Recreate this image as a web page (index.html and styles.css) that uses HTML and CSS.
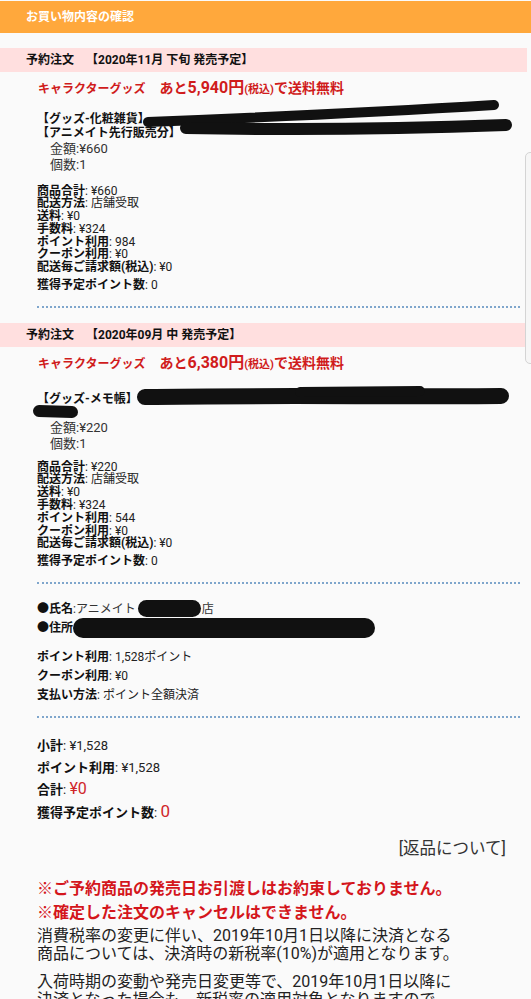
FILE: index.html
```html
<!DOCTYPE html>
<html lang="ja">
<head>
  <meta charset="UTF-8">
  <meta name="viewport" content="width=device-width, initial-scale=1.0">
  <title>お買い物内容の確認</title>
  <link rel="stylesheet" href="styles.css">
</head>
<body>

  <div class="topbar">お買い物内容の確認</div>

  <section class="order">
    <div class="order-head">予約注文　【2020年11月 下旬 発売予定】</div>
    <div class="order-body">
      <p class="free-ship"><span class="cat">キャラクターグッズ</span>　あと<span class="num">5,940円</span><span class="tax">(税込)</span>で送料無料</p>

      <div class="item">
        【グッズ-化粧雑貨】<br>【アニメイト先行販売分】
        <svg class="scrawl" width="531" height="60" viewBox="0 92 531 60">
          <path d="M148 121 C 250 117, 380 111, 494 104" />
          <path class="thick" d="M186 127 C 280 129, 400 128, 506 124" />
        </svg>
      </div>
      <div class="item-price">金額:¥660<br>個数:1</div>

      <div class="summary">
        <div><b>商品合計</b>: ¥660</div>
        <div><b>配送方法</b>: 店舗受取</div>
        <div><b>送料</b>: ¥0</div>
        <div><b>手数料</b>: ¥324</div>
        <div><b>ポイント利用</b>: 984</div>
        <div><b>クーポン利用</b>: ¥0</div>
        <div><b>配送毎ご請求額(税込)</b>: ¥0</div>
      </div>
      <div class="points-earned"><b>獲得予定ポイント数</b>: 0</div>
      <hr class="divider">
    </div>
  </section>

  <section class="order">
    <div class="order-head">予約注文　【2020年09月 中 発売予定】</div>
    <div class="order-body">
      <p class="free-ship"><span class="cat">キャラクターグッズ</span>　あと<span class="num">6,380円</span><span class="tax">(税込)</span>で送料無料</p>

      <div class="item item-second">
        【グッズ-メモ帳】<br>&nbsp;
        <svg class="scrawl" width="531" height="60" viewBox="0 370 531 60">
          <path class="wide" d="M145 394 C 260 392, 400 394, 501 393" />
          <path d="M300 389 L 420 388" />
          <path class="thick" d="M39 408 L 72 409" />
        </svg>
      </div>
      <div class="item-price">金額:¥220<br>個数:1</div>

      <div class="summary">
        <div><b>商品合計</b>: ¥220</div>
        <div><b>配送方法</b>: 店舗受取</div>
        <div><b>送料</b>: ¥0</div>
        <div><b>手数料</b>: ¥324</div>
        <div><b>ポイント利用</b>: 544</div>
        <div><b>クーポン利用</b>: ¥0</div>
        <div><b>配送毎ご請求額(税込)</b>: ¥0</div>
      </div>
      <div class="points-earned"><b>獲得予定ポイント数</b>: 0</div>
      <hr class="divider">
    </div>
  </section>

  <div class="wrap">
    <div class="address">
      <div><b>●氏名</b>:アニメイト<span class="redact redact-name"></span>店</div>
      <div><b>●住所</b><span class="redact redact-addr"></span></div>
    </div>

    <div class="payment">
      <div><b>ポイント利用</b>: 1,528ポイント</div>
      <div><b>クーポン利用</b>: ¥0</div>
      <div><b>支払い方法</b>: ポイント全額決済</div>
    </div>
    <hr class="divider">

    <div class="totals">
      <div><b>小計</b>: ¥1,528</div>
      <div><b>ポイント利用</b>: ¥1,528</div>
      <div><b>合計</b>: <span class="total-red">¥0</span></div>
      <div><b>獲得予定ポイント数</b>: <span class="total-red big">0</span></div>
    </div>

    <div class="returns">[返品について]</div>

    <div class="warn">
      <p>※ご予約商品の発売日お引渡しはお約束しておりません。</p>
      <p>※確定した注文のキャンセルはできません。</p>
    </div>

    <p class="note">消費税率の変更に伴い、2019年10月1日以降に決済となる<br>商品については、決済時の新税率(10%)が適用となります。</p>
    <p class="note">入荷時期の変動や発売日変更等で、2019年10月1日以降に<br>決済となった場合も、新税率の適用対象となりますので<br>予めご了承ください。</p>
  </div>

  <div class="scroll-thumb"></div>

</body>
</html>
```

FILE: styles.css
```css
body {
  margin: 0;
  padding: 0;
  background-color: #fafafa;
  color: #111;
  font-family: Roboto, "Noto Sans CJK JP", sans-serif;
  text-spacing-trim: space-all;
  overflow: hidden;
  position: relative;
}

p {
  margin: 0;
}

b {
  font-weight: 700;
}

.topbar {
  margin-top: 1px;
  height: 32px;
  line-height: 32px;
  padding-left: 26px;
  background-color: #ffa83c;
  color: #fff;
  font-size: 12px;
  font-weight: 700;
}

.order {
  margin-top: 15px;
}

.order-head {
  height: 24px;
  line-height: 24px;
  padding-left: 26px;
  margin-right: 4px;
  background-color: #ffdfdf;
  font-size: 12px;
  font-weight: 700;
}

.order-body,
.wrap {
  padding: 0 11px 0 37px;
}

.free-ship {
  margin-top: 6px;
  padding-left: 1px;
  line-height: 20px;
  height: 20px;
  color: #d01c1c;
  font-size: 14px;
  font-weight: 700;
}

.free-ship .cat {
  font-size: 12px;
}

.free-ship .num {
  font-size: 16px;
}

.free-ship .tax {
  font-size: 11px;
}

.item {
  position: relative;
  margin-top: 15px;
  line-height: 13.5px;
  font-size: 12px;
  font-weight: 700;
}

.item-second {
  margin-top: 20px;
}

/* black marker scribbles over the product names */
.scrawl {
  position: absolute;
  left: -37px;
  top: -20px;
  pointer-events: none;
}

.scrawl path {
  fill: none;
  stroke: #111;
  stroke-width: 10;
  stroke-linecap: round;
}

.scrawl path.thick {
  stroke-width: 12;
}

.scrawl path.wide {
  stroke-width: 16;
}

.item-price {
  margin-top: 1px;
  padding-left: 13px;
  line-height: 15.5px;
  font-size: 13px;
  color: #333;
}

.item-second + .item-price {
  margin-top: 0;
}

.summary {
  margin-top: 12.5px;
  line-height: 12.8px;
  font-size: 12px;
  color: #222;
}

.item-second ~ .summary {
  margin-top: 9.5px;
}

.summary b,
.points-earned b,
.address b,
.payment b,
.totals b {
  color: #111;
}

.points-earned {
  margin-top: 5px;
  line-height: 13px;
  font-size: 12px;
  color: #222;
}

.divider {
  margin: 14px 0 0;
  border: 0;
  border-top: 2px dotted #7fa6cc;
  height: 0;
}

.address {
  margin-top: 15.5px;
  line-height: 19px;
  font-size: 12px;
  color: #333;
}

.redact {
  display: inline-block;
  vertical-align: middle;
  background-color: #111;
  border-radius: 10px;
}

.redact-name {
  width: 63px;
  height: 17px;
  margin: -4px 1px -2px 2px;
}

.redact-addr {
  width: 302px;
  height: 20px;
  margin: -3px 0 -3px;
}

.payment {
  margin-top: 10px;
  line-height: 19px;
  font-size: 12px;
  color: #222;
}

.wrap .divider {
  margin-top: 11.5px;
}

.totals {
  margin-top: 17px;
  line-height: 21.5px;
  font-size: 13px;
  color: #222;
}

.total-red {
  color: #d0262a;
  font-size: 16px;
}

.total-red.big {
  font-size: 17px;
}

.returns {
  margin-top: 14.5px;
  padding-right: 14px;
  text-align: right;
  line-height: 22px;
  font-size: 16.5px;
  color: #333;
}

.warn {
  margin-top: 17.5px;
  line-height: 24px;
  font-size: 16px;
  font-weight: 700;
  color: #d4161c;
}

.note {
  margin-top: 1.5px;
  line-height: 18.5px;
  font-size: 16px;
  color: #222;
}

.note + .note {
  margin-top: 9px;
}

.scroll-thumb {
  position: absolute;
  top: 152px;
  right: -5px;
  width: 9px;
  height: 210px;
  border: 1px solid #d4d4d4;
  border-radius: 5px;
  background-color: #f6f6f6;
}
```
